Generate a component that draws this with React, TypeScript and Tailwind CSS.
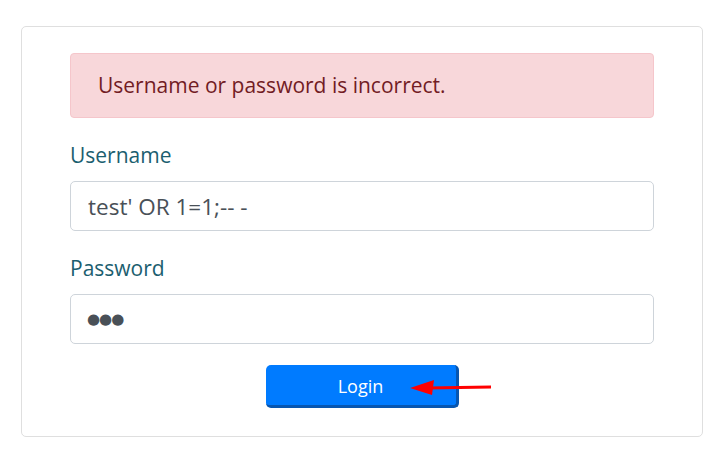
export default function App() {
  return (
    <div className="w-[727px] h-[454px] bg-white pt-[26px] pl-[21px]" style={{ fontFamily: '"Open Sans", "Noto Sans", sans-serif' }}>
      <div className="relative w-[682px] h-[411px] border border-[#dfdfdf] rounded-[5px] px-[48px] pt-[26px]">
        <div className="h-[65px] flex items-center px-[27px] bg-[#f8d7da] border border-[#f5c6cb] rounded-[4px] text-[#721c24] text-[21px]">
          Username or password is incorrect.
        </div>
        <label className="block mt-[22px] mb-[11px] text-[21px] leading-[30px] text-[#1b5e6f]">Username</label>
        <input
          readOnly
          value="test' OR 1=1;-- -"
          className="block w-full h-[50px] px-[17px] border border-[#ced4da] rounded-[5px] text-[22.5px] text-[#495057] outline-none"
        />
        <label className="block mt-[22px] mb-[11px] text-[21px] leading-[30px] text-[#1b5e6f]">Password</label>
        <input
          readOnly
          value="●●●"
          className="block w-full h-[50px] px-[16px] border border-[#ced4da] rounded-[5px] text-[15px] tracking-[-1px] text-[#495057] outline-none"
          style={{ fontFamily: '"DejaVu Sans", sans-serif' }}
        />
        <div className="flex justify-center mt-[21px]">
          <button className="w-[193px] h-[43px] bg-[#007bff] border-r-[3px] border-b-[3px] border-[#0756b0] rounded-[5px] text-white text-[18px] pt-[2px]">
            Login
          </button>
        </div>
        <svg className="absolute left-[388px] top-[351px]" width="84" height="20" viewBox="0 0 84 20">
          <polygon points="0,10 24,2 22,17" fill="#ff0000" />
          <line x1="18" y1="10" x2="81" y2="9" stroke="#ff0000" strokeWidth="3" />
        </svg>
      </div>
    </div>
  );
}
